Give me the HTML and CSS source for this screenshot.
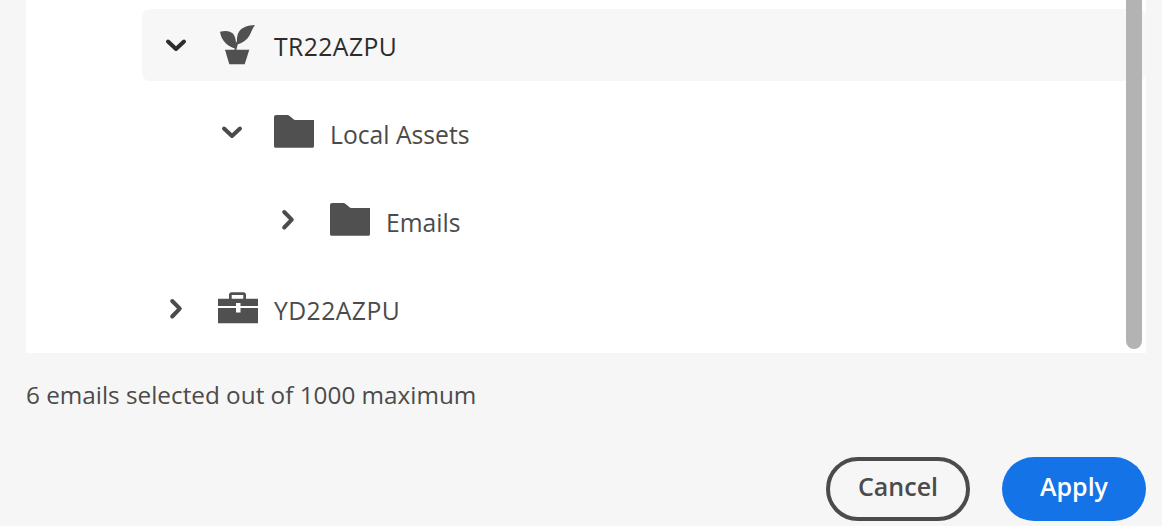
FILE: index.html
```html
<!DOCTYPE html>
<html lang="en">
<head>
<meta charset="utf-8">
<title>Select emails</title>
<link rel="stylesheet" href="styles.css">
</head>
<body>
<main class="dialog">
  <section class="panel">
    <ul class="tree">
      <li class="row row-selected">
        <svg class="chev" viewBox="0 0 28 28"><path d="M6 10.500L14 18L22 10.500"/></svg>
        <svg class="icon" viewBox="0 0 40 44"><path d="M7 26.700H31.300L26.700 41.300H11.300Z"/><path d="M2 8.700C8 7.300 13.500 8 16 12C18 15.500 18.500 21 17.500 25.500C10 23.500 3.500 18.500 2 8.700Z"/><path d="M37 2C30 2.500 24 4 20.800 9C18.800 12.500 18.500 17 19.300 21.500C25 19.500 29 17 31.500 12.500C33.500 9 34.500 5 37 2Z"/><path class="stem" d="M17.300 27L19.300 19"/></svg>
        <span class="label label-strong label-code">TR22AZPU</span>
      </li>
      <li class="row depth-1">
        <svg class="chev" viewBox="0 0 28 28"><path d="M6 9.500L14 17L22 9.500"/></svg>
        <svg class="icon" viewBox="0 0 40 36"><path d="M0 2A2 2 0 0 1 2 0H13.500A2 2 0 0 1 15 .6L20.500 5H40V31.200A1.500 1.500 0 0 1 38.500 32.700H1.500A1.500 1.500 0 0 1 0 31.200Z"/></svg>
        <span class="label">Local Assets</span>
      </li>
      <li class="row depth-2">
        <svg class="chev" viewBox="0 0 28 28"><path d="M10.200 5L17.800 12.700L10.200 20.500"/></svg>
        <svg class="icon" viewBox="0 0 40 36"><path d="M0 2A2 2 0 0 1 2 0H13.500A2 2 0 0 1 15 .6L20.500 5H40V31.200A1.500 1.500 0 0 1 38.500 32.700H1.500A1.500 1.500 0 0 1 0 31.200Z"/></svg>
        <span class="label">Emails</span>
      </li>
      <li class="row">
        <svg class="chev" viewBox="0 0 28 28"><path d="M10.200 6L17.800 13.700L10.200 21.500"/></svg>
        <svg class="icon" viewBox="0 0 40 36"><path fill-rule="evenodd" d="M11 7.700V4A2.700 2.700 0 0 1 13.700 1.300H25.300A2.700 2.700 0 0 1 28 4V7.700H40V15H22.500V12H18V15H0V7.700ZM13.700 7.700H25.300V4H13.700ZM0 17H18V21.500H22.500V17H40V32.300H0Z"/></svg>
        <span class="label label-code">YD22AZPU</span>
      </li>
    </ul>
    <div class="scrollbar"></div>
  </section>
  <p class="status">6 emails selected out of 1000 maximum</p>
  <footer class="actions">
    <button class="btn btn-cancel" type="button">Cancel</button>
    <button class="btn btn-apply" type="button">Apply</button>
  </footer>
</main>
</body>
</html>
```

FILE: styles.css
```css
* { box-sizing: border-box; }
html, body { height: 100%; }
body {
  margin: 0;
  background: #f6f6f6;
  color: #4b4b4b;
  font-family: "Open Sans", "Noto Sans", "Liberation Sans", sans-serif;
  overflow: hidden;
}
.dialog {
  display: flex;
  flex-direction: column;
  padding: 0 16px 5px 26px;
}
.panel {
  position: relative;
  height: 353px;
  background: #fff;
  padding: 9px 0 0 116px;
}
.tree {
  list-style: none;
  margin: 0;
  padding: 0;
  display: flex;
  flex-direction: column;
  gap: 16px;
}
.row {
  display: flex;
  align-items: center;
  height: 72px;
  padding-left: 20px;
  border-radius: 8px;
}
.row-selected { background: #f7f7f7; }
.depth-1 { padding-left: 76px; }
.depth-2 { padding-left: 132px; }
.chev {
  width: 28px;
  height: 28px;
  flex: none;
  margin-right: 28px;
}
.chev path {
  fill: none;
  stroke: #4b4b4b;
  stroke-width: 4;
  stroke-linecap: round;
  stroke-linejoin: round;
}
.row-selected .chev path { stroke: #2c2c2c; }
.icon {
  width: 40px;
  flex: none;
  margin-right: 16px;
  fill: #505050;
}
.icon .stem { fill: none; stroke: #505050; stroke-width: 2; }
.label {
  font-size: 24.7px;
  line-height: 32px;
  padding-top: 4px;
  white-space: nowrap;
}
.label-code { letter-spacing: .45px; }
.label-strong { color: #2c2c2c; }
.scrollbar {
  position: absolute;
  top: 0;
  right: 4px;
  width: 16px;
  height: 349px;
  background: #b3b3b3;
  border-radius: 0 0 8px 8px;
}
.status {
  margin: 26px 0 0;
  font-size: 24.3px;
  line-height: 32px;
  white-space: nowrap;
}
.actions {
  display: flex;
  justify-content: flex-end;
  gap: 32px;
  margin-top: 46px;
}
.btn {
  width: 144px;
  height: 64px;
  border-radius: 32px;
  font: 600 25px/32px "Open Sans", "Noto Sans", sans-serif;
  padding: 0 0 6px;
}
.btn-cancel {
  background: transparent;
  border: 4px solid #4b4b4b;
  color: #4b4b4b;
}
.btn-apply {
  background: #1473e6;
  border: 0;
  color: #fff;
}
```
